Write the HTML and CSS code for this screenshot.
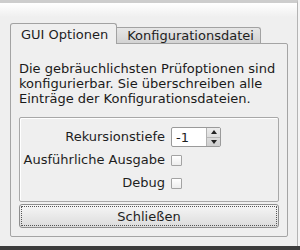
FILE: index.html
```html
<!DOCTYPE html>
<html lang="de">
<head>
  <meta charset="UTF-8" />
  <title>Optionen</title>
  <link rel="stylesheet" href="styles.css">
</head>
<body>
  <div class="frame">
    <div class="dialog">
      <div class="tabs">
        <div class="tab active">GUI Optionen</div>
        <div class="tab">Konfigurationsdatei</div>
      </div>
      <div class="pane">
        <p class="intro">Die gebräuchlichsten Prüfoptionen sind konfigurierbar. Sie überschreiben alle Einträge der Konfigurationsdateien.</p>

        <div class="group">
          <div class="label">Rekursionstiefe</div>
          <div class="spin">
            <div class="spin-value">-1</div>
            <div class="spin-btns">
              <div class="arrow up"></div>
              <div class="arrow down"></div>
            </div>
          </div>

          <div class="label">Ausführliche Ausgabe</div>
          <div class="check-cell"><span class="check"></span></div>

          <div class="label">Debug</div>
          <div class="check-cell"><span class="check"></span></div>
        </div>

        <button class="close-btn">Schließen</button>
      </div>
    </div>
  </div>
  <div class="taskbar"></div>
</body>
</html>
```

FILE: styles.css
```css
body {
  margin: 0;
  width: 300px;
  height: 250px;
  overflow: hidden;
  background-color: #f4f4f4;
  font-family: "DejaVu Sans", sans-serif;
  font-size: 13px;
  color: #1e1e1e;
}
.frame {
  width: 297px;
  height: 243px;
  border-top: 3px solid #cdcdcd;
  border-right: 1px solid #b4b4b4;
  background: linear-gradient(#ffffff 0, #efefef 14px);
}
.dialog {
  padding: 20px 9px 0 10px;
}
.tabs {
  display: flex;
  align-items: flex-end;
  height: 21px;
  margin-bottom: -1px;
}
.tab {
  height: 15px;
  line-height: 15px;
  padding: 0 6px 0 10px;
  margin-bottom: 1px;
  border: 1px solid #a2a2a2;
  border-bottom: none;
  border-left: none;
  border-radius: 0 3px 0 0;
  background: linear-gradient(#e6e6e6, #d3d3d3);
}
.tab.active {
  height: 20px;
  line-height: 21px;
  padding: 0 8px 0 10px;
  margin-bottom: 0;
  border-left: 1px solid #a2a2a2;
  border-radius: 3px 3px 0 0;
  background: #efefef;
  position: relative;
  z-index: 1;
}
.pane {
  display: flex;
  flex-direction: column;
  border: 1px solid #a4a4a4;
  border-radius: 0 2px 2px 2px;
  background-color: #efefef;
  padding: 17px 8px 8px 8px;
}
.intro {
  margin: 0 0 11px 0;
  line-height: 15px;
  color: #1a1a1a;
}
.group {
  display: grid;
  grid-template-columns: 145px auto;
  grid-auto-rows: 20px;
  column-gap: 6px;
  row-gap: 3px;
  padding: 9px 0 8px 0;
  border: 1px solid #a8a8a8;
  border-radius: 2px;
  box-shadow: inset 1px 1px #ffffff;
}
.label {
  text-align: right;
  line-height: 20px;
}
.spin {
  display: flex;
  width: 48px;
  height: 18px;
  border: 1px solid #9a9a9a;
  border-radius: 2px;
  background: #ffffff;
}
.spin-value {
  flex: 1;
  padding-left: 4px;
  line-height: 19px;
}
.spin-btns {
  width: 13px;
  display: flex;
  flex-direction: column;
  border-left: 1px solid #b2b2b2;
  background: linear-gradient(#ececec, #cfcfcf);
}
.arrow {
  flex: 1;
  display: flex;
  align-items: center;
  justify-content: center;
}
.arrow.up {
  border-bottom: 1px solid #b8b8b8;
}
.arrow::before {
  content: "";
  border-left: 3px solid transparent;
  border-right: 3px solid transparent;
}
.arrow.up::before {
  border-bottom: 4px solid #222;
}
.arrow.down::before {
  border-top: 4px solid #222;
}
.check-cell {
  display: flex;
  align-items: center;
}
.check {
  width: 9px;
  height: 9px;
  border: 1px solid #a3a3a3;
  border-radius: 1px;
  background: linear-gradient(#ffffff, #ededed);
}
.close-btn {
  margin-top: 2px;
  height: 24px;
  font-family: "DejaVu Sans", sans-serif;
  font-size: 13px;
  color: #1e1e1e;
  border: 1px solid #8e8e8e;
  border-radius: 3px;
  background: linear-gradient(#f6f6f6, #dcdcdc);
  outline: 1px dotted #555;
  outline-offset: -3px;
}
.taskbar {
  height: 4px;
  background-color: #3c3c3c;
}
```
